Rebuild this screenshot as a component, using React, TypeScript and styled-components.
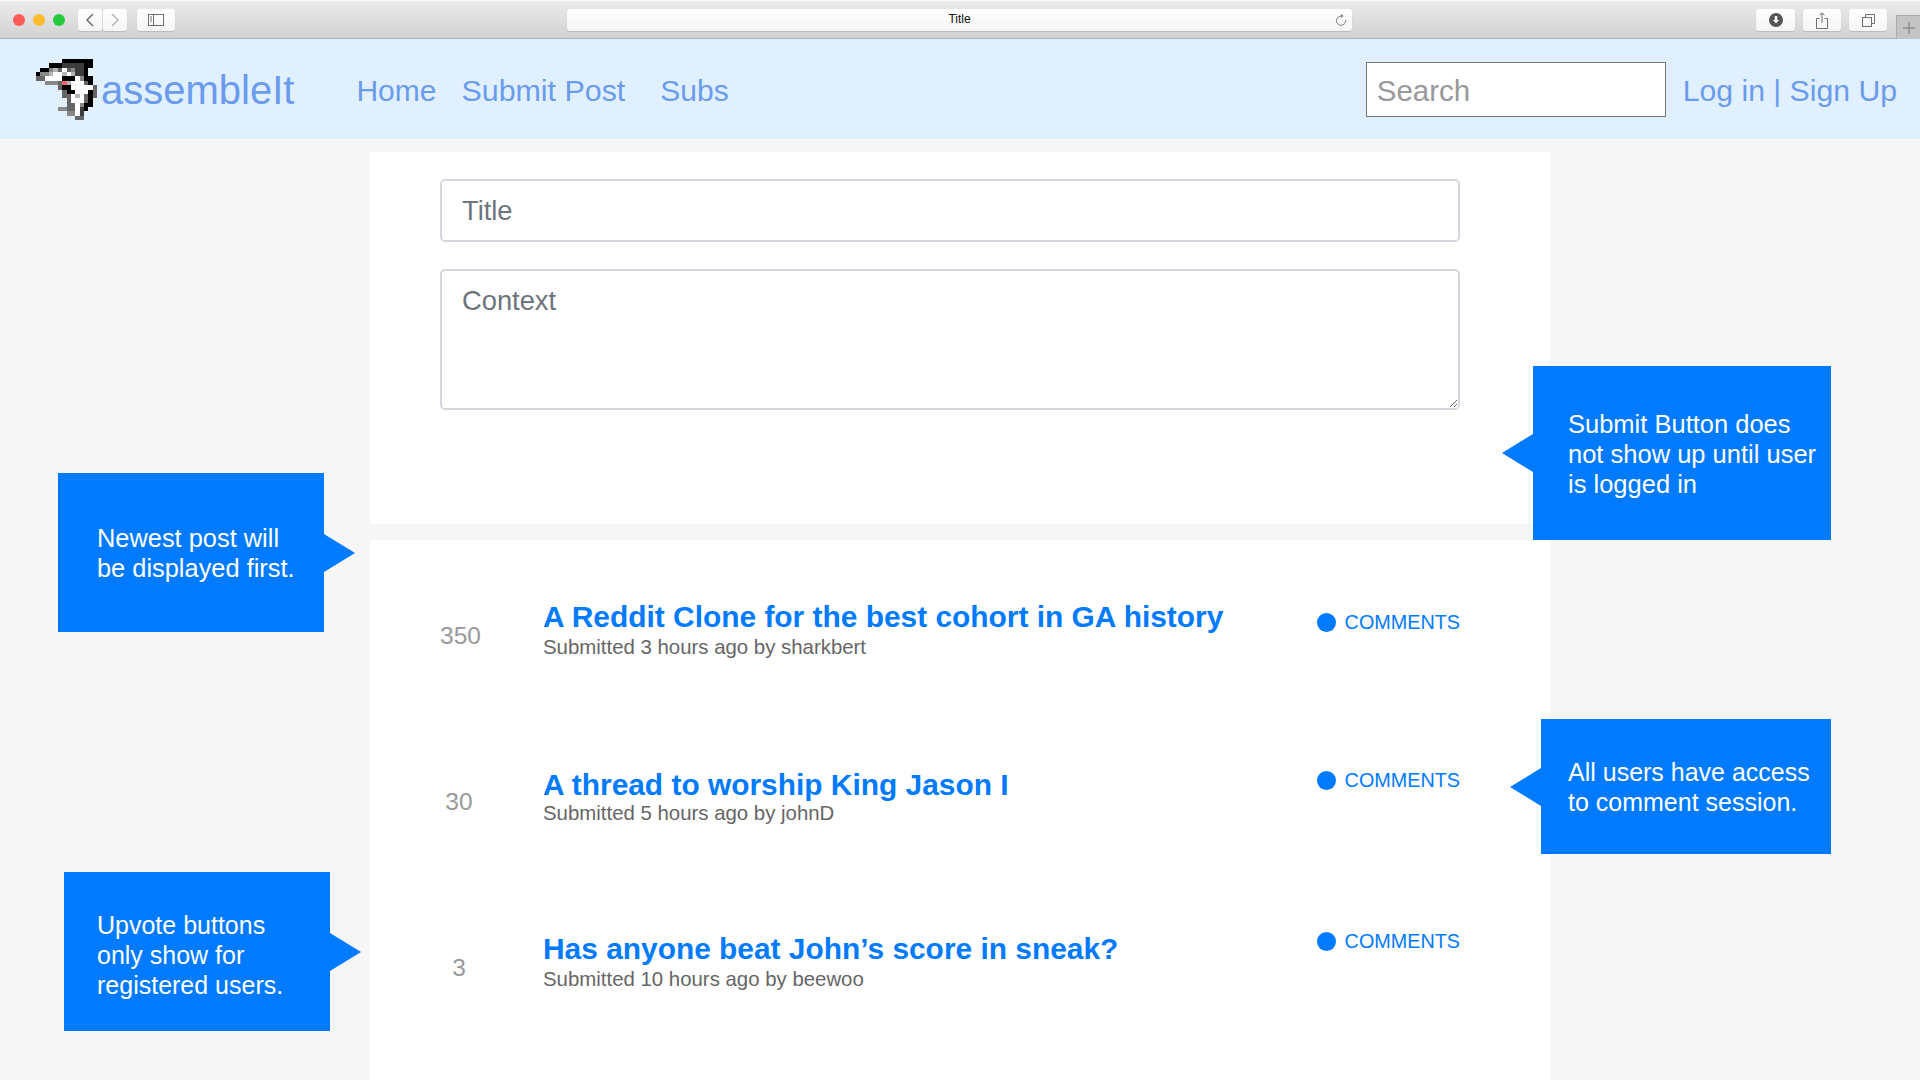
import React from "react";
import styled, { createGlobalStyle } from "styled-components";

const Global = createGlobalStyle`
  html, body { margin: 0; padding: 0; background: #f6f6f6; }
  body { font-family: "Liberation Sans", Arial, sans-serif; }
  * { box-sizing: border-box; }
`;

const Page = styled.div`
  position: relative;
  width: 1920px;
  height: 1080px;
  overflow: hidden;
  background: #f6f6f6;
`;

/* Browser chrome */
const Chrome = styled.div`
  position: relative;
  height: 39px;
  display: flex;
  align-items: flex-start;
  padding: 8px 33px 0 13px;
  background: linear-gradient(#ececec, #d2d2d2);
  border-top: 1px solid #f8f8f8;
  border-bottom: 1px solid #b1b1b1;
`;
const Lights = styled.div`
  display: flex;
  gap: 8px;
  margin-top: 5px;
  margin-right: 13px;
`;
const Light = styled.span<{ $c: string }>`
  width: 12px;
  height: 12px;
  border-radius: 50%;
  background: ${(p) => p.$c};
`;
const ChromeBtn = styled.div<{ $w: number; $mr?: number }>`
  width: ${(p) => p.$w}px;
  height: 22px;
  margin-right: ${(p) => p.$mr ?? 0}px;
  display: flex;
  align-items: center;
  justify-content: center;
  background: linear-gradient(#ffffff, #f4f4f4);
  border-radius: 3px;
  box-shadow: 0 1px 1px #b9b9b9;
`;
const UrlBar = styled.div`
  width: 785px;
  height: 22px;
  margin-left: 392px;
  margin-right: 404px;
  display: grid;
  grid-template-columns: 1fr auto 1fr;
  align-items: center;
  background: linear-gradient(#ffffff, #f4f4f4);
  border-radius: 3px;
  box-shadow: 0 1px 1px #b9b9b9;
`;
const UrlTitle = styled.span`
  grid-column: 2;
  font-size: 12px;
  line-height: 18px;
  margin-top: -2px;
  color: #111;
`;
const Reload = styled.span`
  grid-column: 3;
  justify-self: end;
  margin-right: 5px;
  display: flex;
`;
const NewTab = styled.div`
  position: absolute;
  right: 0;
  top: 14px;
  width: 24px;
  height: 24px;
  display: flex;
  align-items: center;
  justify-content: center;
  background: #c4c4c4;
  border-left: 1px solid #aaa;
  border-top: 1px solid #aaa;
`;

/* Site navigation */
const Nav = styled.nav`
  height: 100px;
  display: flex;
  align-items: center;
  padding: 0 23px 0 36px;
  background: #e1f0fe;
`;
const Logo = styled.svg`
  width: 61px;
  height: 61px;
  margin-right: 4px;
  shape-rendering: crispEdges;
  flex: none;
`;
const Brand = styled.a`
  font-size: 40px;
  color: #6b9bed;
  margin-right: 62px;
  margin-top: 2px;
`;
const NavLink = styled.a<{ $mr?: number; $size?: number }>`
  font-size: ${(p) => p.$size ?? 30}px;
  color: #6b9bed;
  margin-top: 3px;
  margin-right: ${(p) => p.$mr ?? 0}px;
  white-space: nowrap;
`;
const Search = styled.input`
  width: 300px;
  height: 55px;
  margin-left: auto;
  margin-right: 17px;
  padding: 3px 10px 0;
  font-family: inherit;
  font-size: 29.5px;
  border: 1px solid #777;
  background: #fff;
  outline: none;
  &::placeholder { color: #999; opacity: 1; }
`;

/* Page content */
const Main = styled.main`
  width: 1180px;
  margin: 13px 0 0 370px;
  display: flex;
  flex-direction: column;
  gap: 16px;
`;
const FormPanel = styled.section`
  height: 372px;
  padding: 27px 90px 0 70px;
  background: #fff;
  display: flex;
  flex-direction: column;
  gap: 27px;
`;
const fieldCss = `
  width: 100%;
  display: block;
  padding: 0 20px;
  font-family: inherit;
  font-size: 27.3px;
  color: #495057;
  background: #fff;
  border: 2px solid #d3d8de;
  border-radius: 5px;
  outline: none;
`;
const TitleField = styled.input`
  ${fieldCss}
  height: 63px;
  &::placeholder { color: #6c757d; opacity: 1; }
`;
const ContextField = styled.textarea`
  ${fieldCss}
  height: 141px;
  padding-top: 13px;
  line-height: 34px;
  resize: vertical;
  &::placeholder { color: #6c757d; opacity: 1; }
`;
const ListPanel = styled.section`
  height: 540px;
  padding: 48px 90px 0 70px;
  background: #fff;
`;
const Row = styled.article`
  height: 166px;
  display: grid;
  grid-template-columns: 38px 1fr auto;
  column-gap: 65px;
  align-items: start;
`;
const Score = styled.div`
  margin-top: 34px;
  font-size: 24.5px;
  line-height: 28px;
  text-align: center;
  color: #999;
`;
const PostBody = styled.div<{ $top: number }>`
  margin-top: ${(p) => p.$top}px;
`;
const PostTitle = styled.a`
  display: block;
  font-size: 29.9px;
  font-weight: 700;
  line-height: 36px;
  color: #007bff;
`;
const PostMeta = styled.div<{ $gap: number }>`
  margin-top: ${(p) => p.$gap}px;
  font-size: 20.4px;
  line-height: 26px;
  color: #666;
`;
const Comments = styled.a<{ $top: number }>`
  margin-top: ${(p) => p.$top}px;
  display: flex;
  align-items: center;
  gap: 9px;
  font-size: 19.8px;
  line-height: 24px;
  color: #007bff;
`;
const Dot = styled.span`
  width: 19px;
  height: 19px;
  border-radius: 50%;
  background: #007bff;
`;

/* Annotation callouts on top of the page */
const Callout = styled.aside<{ $x: number; $y: number; $w: number; $h: number; $side: "left" | "right"; $pl: number; $fs: number; $pt: number }>`
  position: absolute;
  left: ${(p) => p.$x}px;
  top: ${(p) => p.$y}px;
  width: ${(p) => p.$w}px;
  height: ${(p) => p.$h}px;
  padding-left: ${(p) => p.$pl}px;
  padding-top: ${(p) => p.$pt}px;
  display: flex;
  align-items: center;
  background: #007aff;
  color: #fff;
  font-size: ${(p) => p.$fs}px;
  line-height: 30px;
  &::after {
    content: "";
    position: absolute;
    top: 50%;
    margin-top: -19px;
    border-top: 19px solid transparent;
    border-bottom: 19px solid transparent;
    ${(p) =>
      p.$side === "right"
        ? "left: 100%; border-left: 31px solid #007aff;"
        : "right: 100%; border-right: 31px solid #007aff;"}
  }
`;

const palette: Record<string, string> = {
  k: "#000000",
  d: "#3c3c3c",
  g: "#666666",
  m: "#888888",
  l: "#b4b4b4",
  w: "#ffffff",
  p: "#f4686c",
};
const sprite = [
  "......kkkkkkk.",
  "...kkkdddddkk.",
  ".kkmlgwgmddk..",
  "kmmlwwlwlddk..",
  "ggwwwwkkkwmkk.",
  "..mmmgplwwwgk.",
  ".....gkkwwwwwg",
  "......gkkwwwkg",
  "......ggwlwgkg",
  ".......gwwwgk.",
  ".......ggwmkk.",
  ".....mmggwdk..",
  ".......mmwd...",
  ".........gg...",
];

const SharkLogo = () => (
  <Logo viewBox="0 0 14 14">
    {sprite.flatMap((row, y) =>
      row.split("").map((c, x) =>
        c === "." ? null : <rect key={`${x}-${y}`} x={x} y={y} width="1" height="1" fill={palette[c]} />
      )
    )}
  </Logo>
);

const posts = [
  { score: 350, title: "A Reddit Clone for the best cohort in GA history", meta: "Submitted 3 hours ago by sharkbert", top: 11, gap: -1, ctop: 22 },
  { score: 30, title: "A thread to worship King Jason I", meta: "Submitted 5 hours ago by johnD", top: 13, gap: -3, ctop: 14 },
  { score: 3, title: "Has anyone beat John’s score in sneak?", meta: "Submitted 10 hours ago by beewoo", top: 11, gap: -1, ctop: 9 },
];

const callouts = [
  { x: 58, y: 473, w: 266, h: 159, side: "right" as const, pl: 39, fs: 25.4, pt: 0, lines: ["Newest post will", "be displayed first."] },
  { x: 1533, y: 366, w: 298, h: 174, side: "left" as const, pl: 35, fs: 25.5, pt: 2, lines: ["Submit Button does", "not show up until user", "is logged in"] },
  { x: 1541, y: 719, w: 290, h: 135, side: "left" as const, pl: 27, fs: 25, pt: 0, lines: ["All users have access", "to comment session."] },
  { x: 64, y: 872, w: 266, h: 159, side: "right" as const, pl: 33, fs: 25, pt: 7, lines: ["Upvote buttons", "only show for", "registered users."] },
];

export default function App() {
  return (
    <Page>
      <Global />
      <Chrome>
        <Lights>
          <Light $c="#fc5b57" />
          <Light $c="#fdbb2e" />
          <Light $c="#27c93f" />
        </Lights>
        <ChromeBtn $w={24} $mr={1}>
          <svg width="10" height="14" viewBox="0 0 10 14" fill="none" stroke="#707070" strokeWidth="1.5"><path d="M8 1 2 7l6 6" /></svg>
        </ChromeBtn>
        <ChromeBtn $w={24} $mr={10}>
          <svg width="10" height="14" viewBox="0 0 10 14" fill="none" stroke="#b8b8b8" strokeWidth="1.5"><path d="m2 1 6 6-6 6" /></svg>
        </ChromeBtn>
        <ChromeBtn $w={38}>
          <svg width="16" height="12" viewBox="0 0 16 12" fill="none" stroke="#707070"><rect x=".5" y=".5" width="15" height="11" /><path d="M5.5 1v10M2 3h2M2 5h2M2 7h2" /></svg>
        </ChromeBtn>
        <UrlBar>
          <UrlTitle>Title</UrlTitle>
          <Reload>
            <svg width="12" height="14" viewBox="0 0 12 14" fill="none" stroke="#808080"><path d="M7 3.2A4.6 4.6 0 1 0 10.6 7" /><path d="M6 .8 8.5 3 6 5z" fill="#808080" stroke="none" /></svg>
          </Reload>
        </UrlBar>
        <ChromeBtn $w={39} $mr={8}>
          <svg width="14" height="14" viewBox="0 0 14 14"><circle cx="7" cy="7" r="7" fill="#555" /><path d="M5.8 3h2.4v4H10L7 10.5 4 7h1.8z" fill="#fff" /></svg>
        </ChromeBtn>
        <ChromeBtn $w={38} $mr={8}>
          <svg width="12" height="17" viewBox="0 0 12 17" fill="none" stroke="#707070"><path d="M3.5 6.5h-3v10h11v-10h-3M6 11V1M3.5 3.2 6 .8l2.5 2.4" /></svg>
        </ChromeBtn>
        <ChromeBtn $w={38}>
          <svg width="13" height="13" viewBox="0 0 13 13" fill="none" stroke="#707070"><rect x=".5" y="3.5" width="9" height="9" /><path d="M3.5 3V.5h9v9H10" /></svg>
        </ChromeBtn>
        <NewTab>
          <svg width="12" height="12" viewBox="0 0 12 12" stroke="#777"><path d="M6 0v12M0 6h12" /></svg>
        </NewTab>
      </Chrome>

      <Nav>
        <SharkLogo />
        <Brand>assembleIt</Brand>
        <NavLink $mr={25}>Home</NavLink>
        <NavLink $mr={35} $size={30.4}>Submit Post</NavLink>
        <NavLink>Subs</NavLink>
        <Search placeholder="Search" />
        <NavLink $size={30.2}>Log in | Sign Up</NavLink>
      </Nav>

      <Main>
        <FormPanel>
          <TitleField placeholder="Title" />
          <ContextField placeholder="Context" />
        </FormPanel>
        <ListPanel>
          {posts.map((p) => (
            <Row key={p.title}>
              <Score>{p.score}</Score>
              <PostBody $top={p.top}>
                <PostTitle>{p.title}</PostTitle>
                <PostMeta $gap={p.gap}>{p.meta}</PostMeta>
              </PostBody>
              <Comments $top={p.ctop}>
                <Dot />
                COMMENTS
              </Comments>
            </Row>
          ))}
        </ListPanel>
      </Main>

      {callouts.map((c) => (
        <Callout key={c.lines[0]} $x={c.x} $y={c.y} $w={c.w} $h={c.h} $side={c.side} $pl={c.pl} $fs={c.fs} $pt={c.pt}>
          <div>
            {c.lines.map((l) => (
              <div key={l}>{l}</div>
            ))}
          </div>
        </Callout>
      ))}
    </Page>
  );
}
